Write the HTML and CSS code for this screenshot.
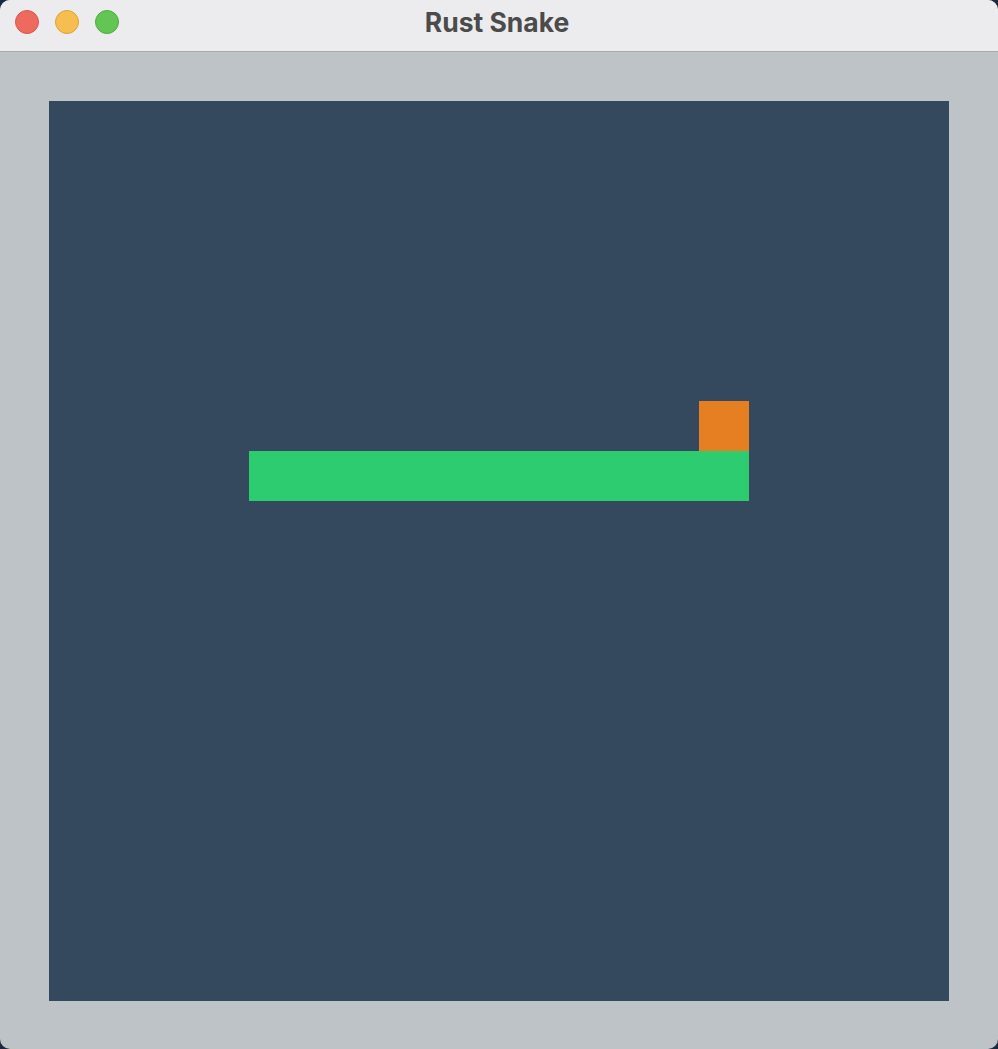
FILE: index.html
```html
<!DOCTYPE html>
<html>
<head>
<meta charset="utf-8">
<link rel="stylesheet" href="styles.css">
<title>Rust Snake</title>
</head>
<body>
<div class="window">
  <div class="titlebar">
    <div class="lights">
      <span class="light red"></span>
      <span class="light yellow"></span>
      <span class="light green"></span>
    </div>
    <div class="title">Rust Snake</div>
  </div>
  <div class="content">
    <div class="board">
      <div class="food"></div>
      <div class="snake"></div>
    </div>
  </div>
</div>
</body>
</html>
```
FILE: styles.css
```css
html, body {
  margin: 0;
  padding: 0;
  background: #1b2a40;
}
.window {
  width: 998px;
  height: 1049px;
  border-radius: 10px;
  overflow: hidden;
  background: #bdc3c7;
  display: flex;
  flex-direction: column;
}
.titlebar {
  height: 51px;
  flex: none;
  background: #ececee;
  border-bottom: 1px solid #a8aaad;
  position: relative;
  display: flex;
  align-items: center;
  justify-content: center;
}
.lights {
  position: absolute;
  left: 15px;
  top: 10px;
  display: flex;
  gap: 16px;
}
.light {
  width: 22px;
  height: 22px;
  border-radius: 50%;
  display: block;
}
.red { background: #ee6a5f; border: 1px solid #d5574c; }
.yellow { background: #f6be4f; border: 1px solid #d9a23c; }
.green { background: #62c554; border: 1px solid #4eaa3f; }
.title {
  font-family: "Inter", "Liberation Sans", sans-serif;
  font-weight: 700;
  font-size: 26.5px;
  color: #4b4b4b;
  margin-left: -4px;
  margin-top: -8px;
}
.content {
  flex: 1;
  padding: 49px 49px 0 49px;
}
.board {
  width: 900px;
  height: 900px;
  background: #34495e;
  display: grid;
  grid-template-columns: repeat(18, 50px);
  grid-template-rows: repeat(18, 50px);
}
.food {
  grid-column: 14;
  grid-row: 7;
  background: #e67e22;
}
.snake {
  grid-column: 5 / 15;
  grid-row: 8;
  background: #2ecc71;
}
```
